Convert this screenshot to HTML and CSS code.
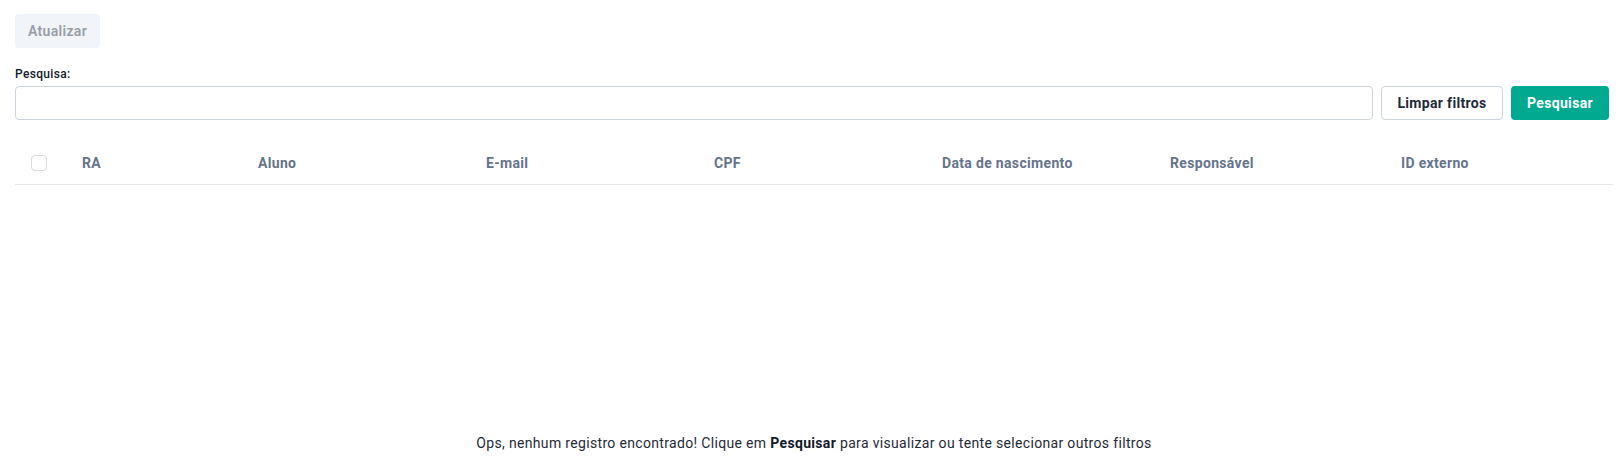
FILE: index.html
```html
<!DOCTYPE html>
<html lang="pt-BR">
<head>
<meta charset="utf-8">
<title>Alunos</title>
<link rel="stylesheet" href="styles.css">
</head>
<body>
<div class="page">
  <div class="toolbar">
    <button class="btn-refresh" type="button">Atualizar</button>
  </div>
  <div class="search">
    <label class="search-label" for="q">Pesquisa:</label>
    <div class="search-row">
      <input class="search-input" id="q" type="text">
      <button class="btn-outline" type="button">Limpar filtros</button>
      <button class="btn-primary" type="button">Pesquisar</button>
    </div>
  </div>
  <div class="table">
    <div class="table-head">
      <div class="cell cell-check"><span class="checkbox"></span></div>
      <div class="cell">RA</div>
      <div class="cell">Aluno</div>
      <div class="cell">E-mail</div>
      <div class="cell">CPF</div>
      <div class="cell">Data de nascimento</div>
      <div class="cell">Responsável</div>
      <div class="cell">ID externo</div>
    </div>
    <div class="empty">Ops, nenhum registro encontrado! Clique em <strong>Pesquisar</strong> para visualizar ou tente selecionar outros filtros</div>
  </div>
</div>
</body>
</html>
```
FILE: styles.css
```css
* { box-sizing: border-box; }
html, body { margin: 0; background: #fff; }
body {
  font-family: Roboto, "Liberation Sans", sans-serif;
  color: #1f2937;
  letter-spacing: 0.33px;
}

.page { padding: 14px 10px 0 15px; }

.toolbar { display: flex; }
.btn-refresh {
  height: 34px;
  width: 85px;
  border: none;
  border-radius: 4px;
  background: #f1f4f8;
  color: #979ea9;
  font-family: inherit;
  letter-spacing: inherit;
  font-size: 14px;
  font-weight: 600;
  padding: 0;
}

.search { margin-top: 18px; display: flex; flex-direction: column; gap: 4px; }
.search-label { font-size: 12px; line-height: 16px; font-weight: 500; color: #111827; }
.search-row { display: flex; gap: 8px; padding-right: 4px; }
.search-input {
  flex: 1;
  height: 34px;
  border: 1px solid #cdd3dd;
  border-radius: 4px;
  background: #fff;
  font-family: inherit;
}
.btn-outline {
  height: 34px;
  width: 122px;
  border: 1px solid #cdd3dd;
  border-radius: 4px;
  background: #fff;
  color: #1e293b;
  font-family: inherit;
  letter-spacing: inherit;
  font-size: 14px;
  font-weight: 700;
  padding: 0;
}
.btn-primary {
  height: 34px;
  width: 98px;
  border: none;
  border-radius: 4px;
  background: #00a98f;
  color: #fff;
  font-family: inherit;
  letter-spacing: inherit;
  font-size: 14px;
  font-weight: 700;
  padding: 0;
}

.table { margin-top: 21px; }
.table-head {
  display: grid;
  grid-template-columns: 51px 176px 228px 228px 228px 228px 231px 1fr;
  height: 44px;
  align-items: center;
  border-bottom: 1px solid #e5e7eb;
}
.cell {
  padding-left: 16px;
  font-size: 14px;
  font-weight: 700;
  color: #64748b;
  white-space: nowrap;
}
.cell-check { display: flex; align-items: center; }
.checkbox {
  display: block;
  width: 16px;
  height: 16px;
  border: 1px solid #d6dae0;
  border-radius: 4px;
  background: #fff;
}

.empty {
  padding-top: 248px;
  text-align: center;
  font-size: 14px;
  line-height: 20px;
  color: #1f2937;
}
.empty strong { font-weight: 700; color: #111827; }
```
